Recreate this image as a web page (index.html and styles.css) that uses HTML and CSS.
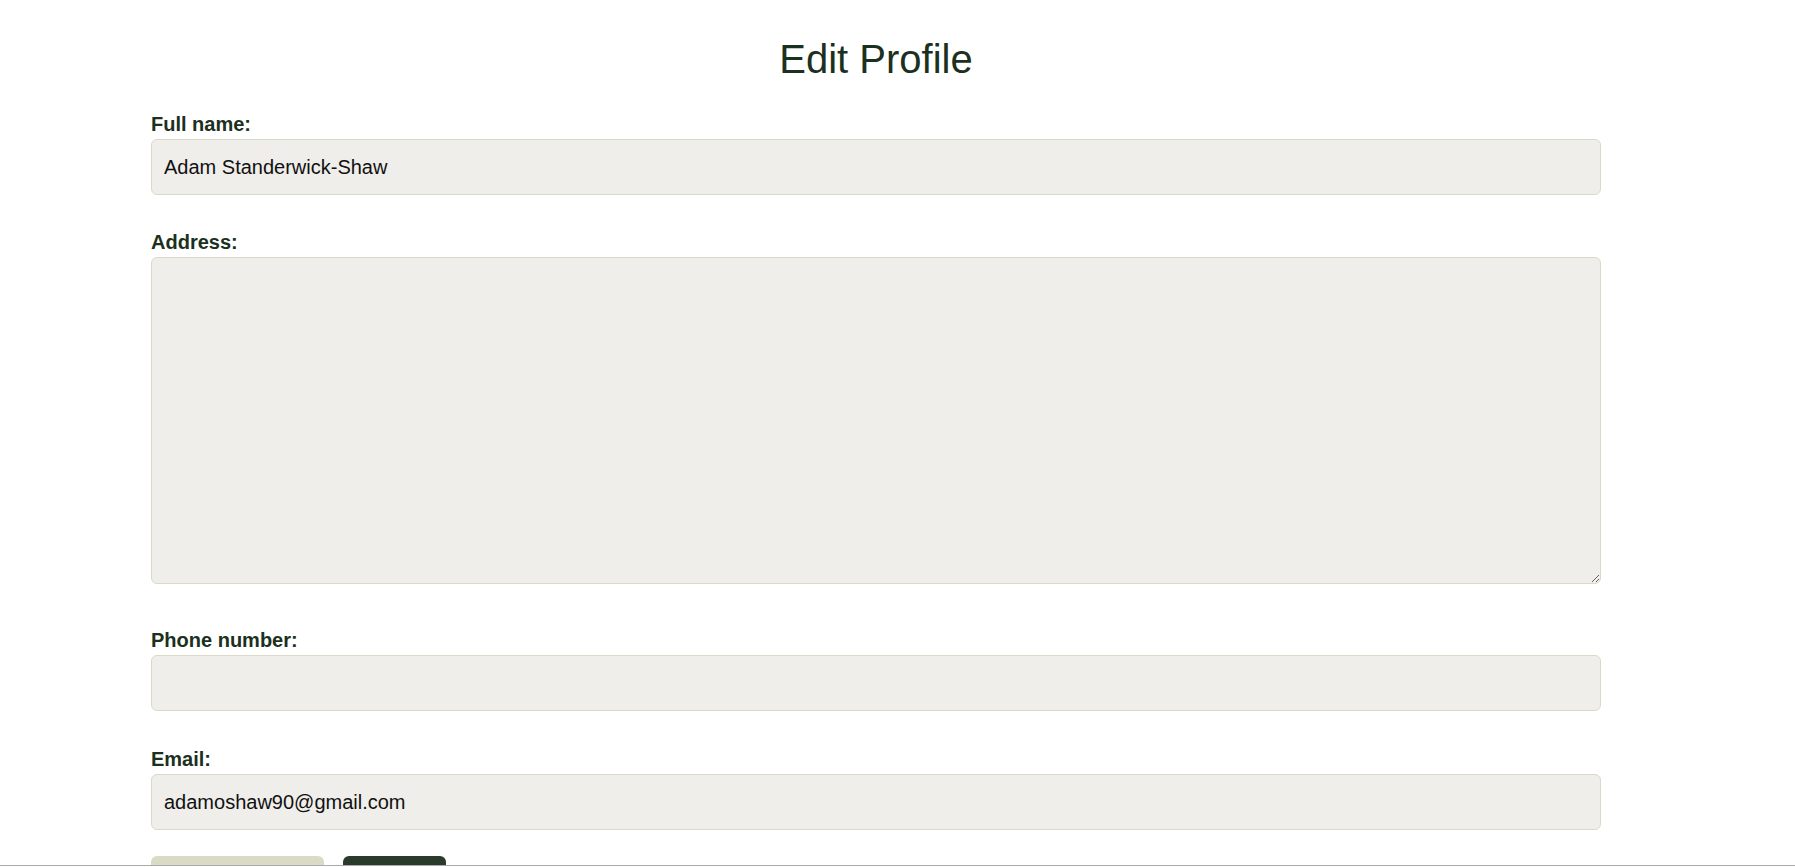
FILE: index.html
```html
<!DOCTYPE html>
<html lang="en">
<head>
<meta charset="utf-8">
<title>Edit Profile</title>
<link rel="stylesheet" href="styles.css">
</head>
<body>
<main class="page">
  <h1 class="title">Edit Profile</h1>
  <form class="form">
    <div class="field">
      <label class="label" for="name">Full name:</label>
      <input class="input" id="name" type="text" value="Adam Standerwick-Shaw">
    </div>
    <div class="field">
      <label class="label" for="address">Address:</label>
      <textarea class="input textarea" id="address"></textarea>
    </div>
    <div class="field field-phone">
      <label class="label" for="phone">Phone number:</label>
      <input class="input" id="phone" type="tel" value="">
    </div>
    <div class="field">
      <label class="label" for="email">Email:</label>
      <input class="input" id="email" type="email" value="adamoshaw90@gmail.com">
    </div>
    <div class="actions">
      <button type="button" class="btn btn-light">Back to profile</button>
      <button type="submit" class="btn btn-dark">Save</button>
    </div>
  </form>
</main>
<footer class="footer"></footer>
</body>
</html>
```

FILE: styles.css
```css
html, body {
  margin: 0;
  padding: 0;
  background: #ffffff;
}

body {
  font-family: "Liberation Sans", Arial, sans-serif;
  color: #1c3020;
}

.page {
  width: 1450px;
  margin-left: 151px;
  padding-top: 36px;
}

.title {
  margin: 0;
  font-size: 40px;
  line-height: 46px;
  font-weight: normal;
  text-align: center;
  color: #1c3020;
}

.form {
  display: flex;
  flex-direction: column;
  padding-top: 31px;
}

.field {
  display: flex;
  flex-direction: column;
  margin-bottom: 35px;
}

.field:first-child {
  margin-bottom: 36px;
}

.field-phone {
  margin-bottom: 37px;
}

.label {
  font-size: 20px;
  line-height: 23px;
  font-weight: bold;
  color: #1c3020;
  margin-bottom: 3px;
}

.input {
  box-sizing: border-box;
  width: 100%;
  height: 56px;
  margin: 0;
  padding: 0 12px;
  font-family: "Liberation Sans", Arial, sans-serif;
  font-size: 20px;
  color: #111111;
  background: #efeeea;
  border: 1px solid #d9dac6;
  border-radius: 6px;
  outline: none;
}

.textarea {
  display: block;
  height: 327px;
  padding: 12px;
  margin-bottom: 10px;
  resize: both;
}

.actions {
  display: flex;
  gap: 19px;
  margin-top: -9px;
}

.btn {
  height: 46px;
  border: none;
  border-radius: 6px;
  font-family: "Liberation Sans", Arial, sans-serif;
  font-size: 18px;
  padding: 14px 0 0;
  cursor: pointer;
}

.btn-light {
  width: 173px;
  background: #d9dbc5;
  color: #1c3020;
}

.btn-dark {
  width: 103px;
  background: #2a3a2b;
  color: #ffffff;
}

.footer {
  position: fixed;
  left: 0;
  right: 0;
  bottom: 0;
  height: 2px;
  box-sizing: border-box;
  border-top: 1px solid #aaaaaa;
  background: #ffffff;
}
```
